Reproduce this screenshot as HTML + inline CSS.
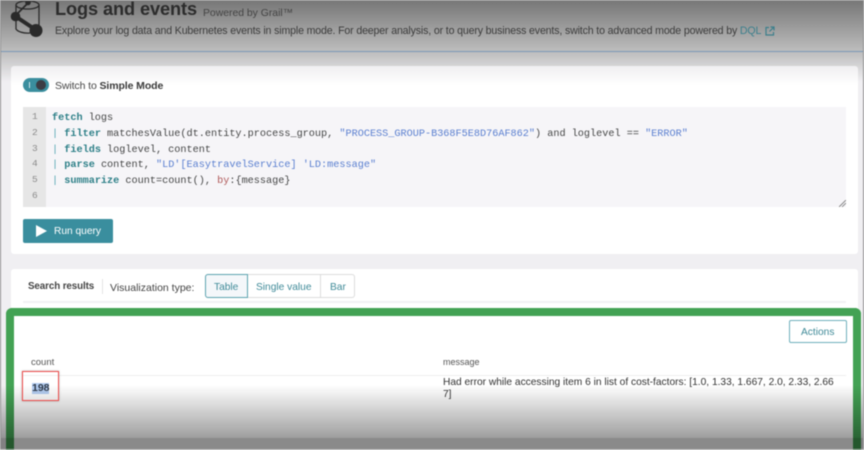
<!DOCTYPE html>
<html>
<head>
<meta charset="utf-8">
<style>
html,body{margin:0;padding:0;width:864px;height:450px;overflow:hidden;background:#f0eff2}
body{font-family:"Liberation Sans",sans-serif;position:relative;color:#3a3a3a}
.a{position:absolute;white-space:nowrap}
.code{font-family:"Liberation Mono",monospace;font-size:10.2px;line-height:15.8px;color:#454646;left:52px}
.code b{color:#2e8088}
.code i{font-style:normal;color:#5a7fd0}
.code u{text-decoration:none;color:#58a8b4}
.code s{text-decoration:none;color:#b05a5a}
.ln{font-family:"Liberation Mono",monospace;font-size:9.5px;color:#8a8a8a;left:32px}
#blur{position:absolute;left:0;top:0;width:864px;height:450px;filter:blur(.45px)}
</style>
</head>
<body>
<div id="blur">
<!-- header -->
<div class="a" style="left:0;top:0;width:864px;height:51px;background:linear-gradient(#767676,#bdbdbd)"></div>
<div class="a" style="left:0;top:51px;width:864px;height:1px;background:#7c9ab8"></div>
<div class="a" style="left:0;top:52px;width:864px;height:30px;background:linear-gradient(#bdbdbd,#f0eff2)"></div>

<svg class="a" style="left:8px;top:0" width="40" height="40" viewBox="8 0 40 40">
<g fill="none" stroke="#2a2a2a" stroke-width="1.3">
<ellipse cx="27.500" cy="5" rx="11.500" ry="4"/>
<path d="M16 5V29C18 32 24 33.500 30 33M39 5V25"/>
</g>
<path d="M15 16L36 30" stroke="#2a2a2a" stroke-width="4"/>
<path d="M15 16L28 3" stroke="#2a2a2a" stroke-width="1.800"/>
<circle cx="15.500" cy="16.500" r="4.800" fill="#2a2a2a"/>
<circle cx="36" cy="30.500" r="6.500" fill="#2a2a2a"/>
<circle cx="28" cy="2.500" r="2.800" fill="#2a2a2a"/>
</svg>

<div class="a" style="left:55px;top:-1px;font-size:18.2px;line-height:20px;font-weight:bold;color:#2c2c2c;letter-spacing:-.1px">Logs and events</div>
<div class="a" style="left:203px;top:6px;font-size:10.4px;line-height:16px;color:#444">Powered by Grail™</div>
<div class="a" style="left:55px;top:23px;font-size:10.6px;line-height:16px;color:#3c3c3c;letter-spacing:-.15px">Explore your log data and Kubernetes events in simple mode. For deeper analysis, or to query business events, switch to advanced mode powered by <span style="color:#3c7f8c">DQL</span></div>
<svg class="a" style="left:765px;top:26px" width="10" height="10" viewBox="0 0 10 10" fill="none" stroke="#3c7f8c" stroke-width="1.2"><path d="M4 1.500H1V9H8.500V6M5.500 1H9V4.500M9 1L4.500 5.500"/></svg>

<!-- query card -->
<div class="a" style="left:11px;top:66px;width:847px;height:188px;background:linear-gradient(#f0eff1,#fff 19px);border-radius:3px"></div>
<div class="a" style="left:23px;top:78px;width:26px;height:14px;background:#3a8e9e;border-radius:7px"></div>
<div class="a" style="left:29px;top:82px;width:1px;height:6px;background:#cfe6ea"></div>
<div class="a" style="left:36px;top:80px;width:10px;height:10px;background:#3c3c44;border-radius:50%"></div>
<div class="a" style="left:55px;top:78px;font-size:10.5px;line-height:16px;color:#444;letter-spacing:-.1px">Switch to <b style="color:#3a3a3a">Simple Mode</b></div>

<div class="a" style="left:23px;top:107px;width:823px;height:100px;background:#f6f5f8"></div>
<div class="a" style="left:23px;top:107px;width:23px;height:100px;background:#e6e6e6"></div>
<div class="a ln" style="top:109px;line-height:15.8px;white-space:pre">1
2
3
4
5
6</div>
<div class="a code" style="top:111px;white-space:pre"><b>fetch</b> logs
<u>|</u> <b>filter</b> matchesValue(dt.entity.process_group, <i>"PROCESS_GROUP-B368F5E8D76AF862"</i>) and loglevel == <i>"ERROR"</i>
<u>|</u> <b>fields</b> loglevel, content
<u>|</u> <b>parse</b> content, <i>"LD'[EasytravelService] 'LD:message"</i>
<u>|</u> <b>summarize</b> count=count(), <s>by</s>:{message}</div>
<svg class="a" style="left:839px;top:200px" width="7" height="7"><path d="M0 7L7 0M3 7L7 3" stroke="#777" stroke-width=".8"/></svg>

<div class="a" style="left:23px;top:219px;width:90px;height:24px;background:#3a8e9e;border-radius:2px"></div>
<svg class="a" style="left:36px;top:225px" width="12" height="12"><path d="M0 0L11 6L0 12Z" fill="#fff"/></svg>
<div class="a" style="left:54px;top:224px;font-size:10.2px;line-height:16px;color:#fff">Run query</div>

<!-- results card -->
<div class="a" style="left:11px;top:269px;width:847px;height:181px;background:#fff;border-radius:3px"></div>
<div class="a" style="left:28px;top:279px;font-size:9.8px;line-height:16px;font-weight:bold;color:#444;letter-spacing:-.1px">Search results</div>
<div class="a" style="left:102px;top:279px;width:1px;height:15px;background:#e4e4e4"></div>
<div class="a" style="left:110px;top:280px;font-size:10.5px;line-height:16px;color:#444">Visualization type:</div>
<div class="a" style="left:205px;top:274px;width:148px;height:22px;border:1px solid #dcdcdc;border-radius:3px;background:#fff"></div>
<div class="a" style="left:205px;top:274px;width:41px;height:22px;border:1px solid #5ea3b0;border-radius:3px 0 0 3px;background:#f4f7fa"></div>
<div class="a" style="left:320px;top:275px;width:1px;height:22px;background:#dcdcdc"></div>
<div class="a" style="left:214px;top:280px;font-size:10.2px;line-height:16px;color:#3f8a98">Table</div>
<div class="a" style="left:256px;top:280px;font-size:10.2px;line-height:16px;color:#3f8a98">Single value</div>
<div class="a" style="left:330px;top:280px;font-size:10.2px;line-height:16px;color:#3f8a98">Bar</div>
<div class="a" style="left:23px;top:301px;width:823px;height:2px;background:#f2f2f4"></div>

<!-- green frame -->
<div class="a" style="left:6px;top:308px;width:839px;height:142px;border:8px solid #43a254;border-bottom:0;border-radius:6px 6px 0 0;background:#fff"></div>

<div class="a" style="left:789px;top:320px;width:56px;height:21px;border:1px solid #6fb0bc;border-radius:2px"></div>
<div class="a" style="left:801px;top:325px;font-size:10.2px;line-height:16px;color:#3f8a98">Actions</div>

<div class="a" style="left:31px;top:356px;font-size:9.5px;line-height:14px;color:#555">count</div>
<div class="a" style="left:443px;top:355px;font-size:9px;line-height:14px;color:#555">message</div>
<div class="a" style="left:23px;top:375px;width:823px;height:1px;background:#eeeeee"></div>
<div class="a" style="left:32px;top:383px;width:17px;height:11px;background:#b3cdf2"></div>
<div class="a" style="left:32px;top:381px;font-size:10.5px;line-height:15px;font-weight:bold;color:#2f3a4a">198</div>
<div class="a" style="left:443px;top:377px;font-size:10.2px;line-height:11.7px;color:#333;white-space:pre">Had error while accessing item 6 in list of cost-factors: [1.0, 1.33, 1.667, 2.0, 2.33, 2.66
7]</div>

<!-- bottom fade -->
<div class="a" style="left:0;top:385px;width:864px;height:53px;background:linear-gradient(rgba(0,0,0,0),rgba(0,0,0,.38))"></div>
<div class="a" style="left:0;top:438px;width:864px;height:12px;background:rgba(0,0,0,.46)"></div>

<!-- red highlight above fade -->
<div class="a" style="left:22px;top:371px;width:35px;height:28px;border:1.5px solid #ee4b4a;box-shadow:0 0 2px rgba(0,0,0,.3)"></div>

<!-- outer edges -->
<div class="a" style="left:0;top:0;width:1px;height:450px;background:#8e8e8e"></div>
<div class="a" style="right:0;top:0;width:1px;height:450px;background:#8e8e8e"></div>
<div class="a" style="left:0;top:0;width:864px;height:1px;background:#8e8e8e"></div>
<div class="a" style="left:0;top:449px;width:864px;height:1px;background:#b4b4b4"></div>
</div>
</body>
</html>
